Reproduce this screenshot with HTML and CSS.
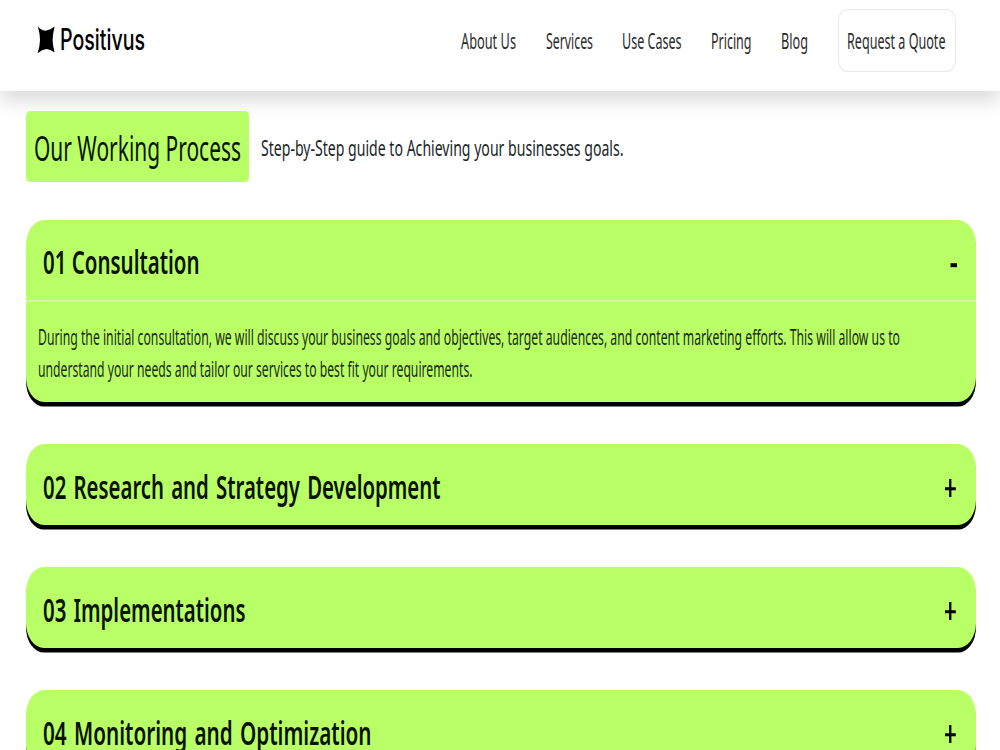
FILE: index.html
```html
<!DOCTYPE html>
<html lang="en">
<head>
<meta charset="utf-8">
<title>Positivus</title>
<link rel="stylesheet" href="styles.css">
</head>
<body>
<header class="header">
  <a class="logo">
    <svg class="logo-mark" width="18" height="28" viewBox="0 0 18 28"><path d="M0.800 0.300Q5 5.500 9.500 4.500Q13.500 4 17.600 0.500Q15.800 8 15.600 14Q15.800 20 17.600 26.500Q13.500 23 9.500 23Q5 23.500 0.600 27.300Q3 20 3 14Q3 8 0.800 0.300Z"/></svg>
    <svg class="txt logo-text" width="85" height="30"><text y="24" textLength="85" lengthAdjust="spacingAndGlyphs">Positivus</text></svg>
  </a>
  <nav class="nav">
    <a><svg class="txt nav-text" width="55" height="24"><text y="20.8" textLength="55" lengthAdjust="spacingAndGlyphs">About Us</text></svg></a>
    <a><svg class="txt nav-text" width="47" height="24"><text y="20.8" textLength="47" lengthAdjust="spacingAndGlyphs">Services</text></svg></a>
    <a><svg class="txt nav-text" width="59" height="24"><text y="20.8" textLength="59.5" lengthAdjust="spacingAndGlyphs">Use Cases</text></svg></a>
    <a><svg class="txt nav-text" width="40.5" height="24"><text y="20.8" textLength="40.5" lengthAdjust="spacingAndGlyphs">Pricing</text></svg></a>
    <a><svg class="txt nav-text" width="27.5" height="24"><text y="20.8" textLength="27" lengthAdjust="spacingAndGlyphs">Blog</text></svg></a>
    <a class="quote"><svg class="txt nav-text" width="99" height="24"><text y="20.8" textLength="98.5" lengthAdjust="spacingAndGlyphs">Request a Quote</text></svg></a>
  </nav>
</header>
<main class="main">
  <div class="intro">
    <h1 class="badge"><svg class="txt title-text" width="207" height="40"><text y="34" textLength="207" lengthAdjust="spacingAndGlyphs">Our Working Process</text></svg></h1>
    <p class="lead"><svg class="txt lead-text" width="363" height="30"><text y="24.2" textLength="362.500" lengthAdjust="spacingAndGlyphs">Step-by-Step guide to Achieving your businesses goals.</text></svg></p>
  </div>
  <section class="card">
    <div class="card-head">
      <h2><svg class="txt head-text" width="157" height="40"><text class="tight" y="33.400" textLength="156.5" lengthAdjust="spacingAndGlyphs">01 Consultation</text></svg></h2>
      <svg class="sign" width="14" height="20"><path d="M6.500 9.200h6.500v4h-6.500z"/></svg>
    </div>
    <div class="card-body">
      <svg class="txt body-text" width="864" height="32"><text y="24.500" textLength="862" lengthAdjust="spacingAndGlyphs">During the initial consultation, we will discuss your business goals and objectives, target audiences, and content marketing efforts. This will allow us to</text></svg>
      <svg class="txt body-text" width="864" height="32"><text y="24.500" textLength="434.500" lengthAdjust="spacingAndGlyphs">understand your needs and tailor our services to best fit your requirements.</text></svg>
    </div>
  </section>
  <section class="card">
    <div class="card-head">
      <h2><svg class="txt head-text" width="398" height="40"><text y="34" textLength="397.5" lengthAdjust="spacingAndGlyphs">02 Research and Strategy Development</text></svg></h2>
      <svg class="sign" width="14" height="20"><path d="M1 9.300h4.100v-8.300h2.300v8.300h4.400v3h-4.400v6.700h-2.300v-6.700h-4.100z"/></svg>
    </div>
  </section>
  <section class="card">
    <div class="card-head">
      <h2><svg class="txt head-text" width="203" height="40"><text y="33.800" textLength="202.5" lengthAdjust="spacingAndGlyphs">03 Implementations</text></svg></h2>
      <svg class="sign" width="14" height="20"><path d="M1 9.300h4.100v-8.300h2.300v8.300h4.400v3h-4.400v6.700h-2.300v-6.700h-4.100z"/></svg>
    </div>
  </section>
  <section class="card">
    <div class="card-head">
      <h2><svg class="txt head-text" width="329" height="40"><text y="33.500" textLength="328.5" lengthAdjust="spacingAndGlyphs">04 Monitoring and Optimization</text></svg></h2>
      <svg class="sign" width="14" height="20"><path d="M1 9.300h4.100v-8.300h2.300v8.300h4.400v3h-4.400v6.700h-2.300v-6.700h-4.100z"/></svg>
    </div>
  </section>
</main>
</body>
</html>
```
FILE: styles.css
```css
* { box-sizing: border-box; }
html, body { margin: 0; height: 750px; overflow: hidden; background: #fff; }
body { font-family: "Noto Sans", "Open Sans", sans-serif; }
h1, h2, p { margin: 0; font-weight: 400; }
svg { display: block; flex: none; }
.txt { overflow: visible; }

.header {
  display: flex;
  justify-content: space-between;
  align-items: flex-start;
  height: 91px;
  padding: 8.5px 44.5px 0 37px;
  background: #fff;
  box-shadow: 0 10px 18px rgba(0, 0, 0, .14);
}
.logo { display: flex; gap: 5px; padding-top: 17.5px; }
.logo-text { font: 500 29.5px Inter, Roboto, sans-serif; }
.nav { display: flex; align-items: center; gap: 29.5px; height: 63.5px; }
.nav-text { font-size: 21.5px; fill: #2b2b2b; }
.quote {
  display: flex;
  align-items: center;
  width: 118px;
  height: 63.5px;
  padding-left: 8px;
  border: 1px solid #e9e9e9;
  border-radius: 9px / 12px;
}

.main { padding: 20px 24px 0 26px; }
.intro { display: flex; align-items: center; gap: 12px; height: 71px; margin-bottom: 38px; }
.badge {
  width: 223.4px;
  height: 71px;
  padding: 16px 0 0 8px;
  border-radius: 4px / 5px;
  background: #b9ff66;
}
.title-text { font-size: 34px; fill: #0b1400; }
.lead-text { font-size: 22.500px; fill: #212529; }

.card {
  height: 80.7px;
  margin-bottom: 42px;
  border-radius: 18px / 25px;
  background: #b9ff66;
  box-shadow: 0 4.600px 0 #000;
}
.card:first-of-type { height: 182.300px; }
.card-head {
  display: flex;
  justify-content: space-between;
  align-items: center;
  height: 80px;
  padding: 2px 18px 0 17px;
}
.head-text { font-weight: 600; font-size: 33px; fill: #0a1200; word-spacing: 3px; }
.head-text .tight { word-spacing: 0; }
.sign { margin-top: 6px; fill: #000; }
.card-body { padding: 18px 0 0 11.5px; border-top: 2px solid #d5f2b0; }
.body-text { font-size: 21.500px; fill: #1d2b12; }
```
